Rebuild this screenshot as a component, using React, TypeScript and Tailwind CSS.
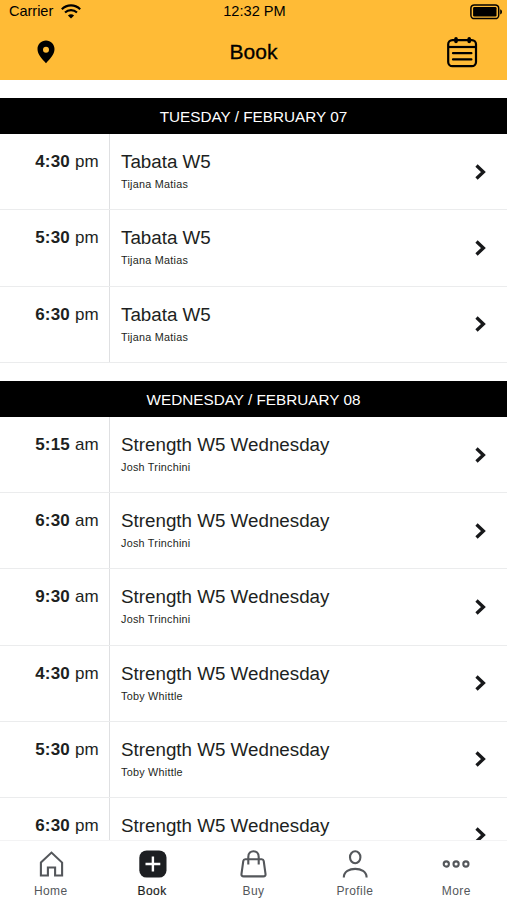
import React from "react";

type ClassItem = { time: string; period: string; name: string; coach?: string };
type Day = { label: string; items: ClassItem[] };

const days: Day[] = [
	{
		label: "TUESDAY / FEBRUARY 07",
		items: [
			{ time: "4:30", period: "pm", name: "Tabata W5", coach: "Tijana Matias" },
			{ time: "5:30", period: "pm", name: "Tabata W5", coach: "Tijana Matias" },
			{ time: "6:30", period: "pm", name: "Tabata W5", coach: "Tijana Matias" },
		],
	},
	{
		label: "WEDNESDAY / FEBRUARY 08",
		items: [
			{ time: "5:15", period: "am", name: "Strength W5 Wednesday", coach: "Josh Trinchini" },
			{ time: "6:30", period: "am", name: "Strength W5 Wednesday", coach: "Josh Trinchini" },
			{ time: "9:30", period: "am", name: "Strength W5 Wednesday", coach: "Josh Trinchini" },
			{ time: "4:30", period: "pm", name: "Strength W5 Wednesday", coach: "Toby Whittle" },
			{ time: "5:30", period: "pm", name: "Strength W5 Wednesday", coach: "Toby Whittle" },
			{ time: "6:30", period: "pm", name: "Strength W5 Wednesday" },
		],
	},
];

const WifiIcon = () => (
	<svg className="h-[15px] w-5" viewBox="0 0 20 15" fill="none" stroke="black" strokeWidth="2.1">
		<path d="M.8 5.2C6 .1 14 .1 19.2 5.2" />
		<path d="M4 8.6C7.4 5.3 12.6 5.3 16 8.6" />
		<path d="M10 14.5 6.9 11.4C8.6 9.8 11.4 9.8 13.1 11.4Z" fill="black" stroke="none" />
	</svg>
);

const BatteryIcon = () => (
	<svg className="h-4 w-[33px]" viewBox="0 0 33 16">
		<rect x=".9" y=".9" width="27.8" height="13.7" rx="3.4" fill="none" stroke="black" strokeWidth="1.5" />
		<rect x="3.1" y="3.1" width="23.4" height="9.3" rx="1.2" />
		<path d="M30.2 5.2c2.4.8 2.4 4.4 0 5.2Z" />
	</svg>
);

const PinIcon = () => (
	<svg className="h-6 w-[18px]" viewBox="0 0 18 24">
		<path
			fillRule="evenodd"
			d="M9 .4C4.2.4.5 4.1.5 8.9.5 14.3 5 18.7 9 23.2c4-4.5 8.5-8.9 8.5-14.3C17.5 4.1 13.8.4 9 .4ZM9 6.8a3 3 0 1 1 0 6 3 3 0 0 1 0-6Z"
		/>
	</svg>
);

const CalendarIcon = () => (
	<svg className="h-8 w-8" viewBox="0 0 32 32" fill="none" stroke="black" strokeWidth="2.2">
		<rect x="2.2" y="4.1" width="27.8" height="26" rx="4.2" />
		<path d="M2.2 11h27.8" />
		<path d="M7 17.2h18.4M7 23.4h18.4" strokeLinecap="round" />
		<path d="M10 2.8v2.6M23.2 2.8v2.6" strokeWidth="3.6" strokeLinecap="round" />
	</svg>
);

const ChevronIcon = () => (
	<svg className="h-4 w-[11px] shrink-0" viewBox="0 0 11 16" fill="none" stroke="#17181a" strokeWidth="3.3">
		<path d="m1.5 1.5 6.9 6.5-6.9 6.5" />
	</svg>
);

const HomeIcon = () => (
	<svg className="h-8 w-8" viewBox="0 0 32 32" fill="none" stroke="#54575b" strokeWidth="2.1">
		<path d="M5.9 14.6 16.5 4.6l10.6 10v12.9h-7v-8h-7.2v8h-7Z" />
	</svg>
);

const BookIcon = () => (
	<svg className="h-8 w-8" viewBox="0 0 32 32">
		<rect x="3.3" y="2.4" width="27.2" height="27.2" rx="7.4" fill="#1d1f22" />
		<path d="M16.9 8.6v14.8M9.5 16h14.8" stroke="white" strokeWidth="2.4" />
	</svg>
);

const BuyIcon = () => (
	<svg className="h-8 w-8" viewBox="0 0 32 32" fill="none" stroke="#54575b" strokeWidth="2.1">
		<path
			d="M8.2 11.2h16.6c1.2 0 1.7.6 1.9 1.7l1.8 13c.2 1.6-.6 2.5-2.1 2.5H6.6c-1.5 0-2.3-.9-2.1-2.5l1.8-13c.2-1.1.7-1.7 1.9-1.7Z"
			strokeLinejoin="round"
		/>
		<path d="M11.3 16.6V8.9c0-7.6 10.4-7.6 10.4 0v7.7" />
	</svg>
);

const ProfileIcon = () => (
	<svg className="h-8 w-8" viewBox="0 0 32 32" fill="none" stroke="#54575b" strokeWidth="2.1">
		<ellipse cx="16.2" cy="9.3" rx="5.2" ry="6" />
		<path d="M4.8 29.4c0-11.4 22.8-11.4 22.8 0" />
	</svg>
);

const MoreIcon = () => (
	<svg className="h-8 w-8" viewBox="0 0 32 32" fill="none" stroke="#54575b" strokeWidth="2.1">
		<circle cx="6.3" cy="16" r="2.6" />
		<circle cx="16.1" cy="16" r="2.6" />
		<circle cx="25.9" cy="16" r="2.6" />
	</svg>
);

const tabs = [
	{ label: "Home", icon: <HomeIcon /> },
	{ label: "Book", icon: <BookIcon />, active: true },
	{ label: "Buy", icon: <BuyIcon /> },
	{ label: "Profile", icon: <ProfileIcon /> },
	{ label: "More", icon: <MoreIcon /> },
];

const ClassRow: React.FC<{ item: ClassItem }> = ({ item }) => (
	<div className="flex h-[76.2px] border-b border-[#ebeced]">
		<div className="w-[110px] shrink-0 border-r border-[#dfe0e2] pt-[18px] pr-[10px] text-right text-[17px] leading-5 tracking-[0.2px]">
			<span className="font-bold">{item.time}</span> {item.period}
		</div>
		<div className="min-w-0 flex-1 pt-[17px] pl-[11px]">
			<div className="text-[18.8px] leading-[22px]">{item.name}</div>
			{item.coach && <div className="mt-[5px] text-[10.8px] leading-[13px] tracking-[0.25px]">{item.coach}</div>}
		</div>
		<div className="flex items-center pr-[21px]">
			<ChevronIcon />
		</div>
	</div>
);

const App: React.FC = () => {
	return (
		<div className="flex h-screen w-full flex-col overflow-hidden bg-white font-['Liberation_Sans',Arial,sans-serif] text-[#1d1f22]">
			{/* Status bar and title */}
			<header className="h-20 shrink-0 bg-[#ffbb36] text-black">
				<div className="grid h-6 grid-cols-3 items-center pr-1 pl-[9px] text-[14.6px]">
					<div className="flex items-center gap-2">
						<span className="tracking-[-0.05px]">Carrier</span>
						<WifiIcon />
					</div>
					<span className="pr-[3px] text-center">12:32 PM</span>
					<div className="flex justify-end">
						<BatteryIcon />
					</div>
				</div>
				<div className="flex h-14 items-center justify-between pr-[29px] pl-[37px]">
					<div className="w-8">
						<PinIcon />
					</div>
					<h1 className="pr-2 text-[21px] [-webkit-text-stroke:0.3px_black]">Book</h1>
					<CalendarIcon />
				</div>
			</header>
			{/* Schedule */}
			<main className="min-h-0 flex-1 overflow-hidden">
				{days.map((day) => (
					<section key={day.label} className="pt-[18px]">
						<h2 className="h-[36.2px] bg-black text-center text-[15.3px] leading-[37px] text-white">{day.label}</h2>
						{day.items.map((item, i) => (
							<ClassRow key={i} item={item} />
						))}
					</section>
				))}
			</main>
			{/* Bottom navigation */}
			<nav className="grid h-[60px] shrink-0 grid-cols-5 border-t border-[#f3f3f4] bg-white">
				{tabs.map((tab) => (
					<div key={tab.label} className="flex flex-col items-center pt-[7px]">
						{tab.icon}
						<span
							className={`mt-[2px] text-[12px] tracking-[0.4px] ${tab.active ? "text-[#1d1f22] [-webkit-text-stroke:0.2px_#1d1f22]" : "text-[#54575b]"}`}
						>
							{tab.label}
						</span>
					</div>
				))}
			</nav>
		</div>
	);
};

export default App;
